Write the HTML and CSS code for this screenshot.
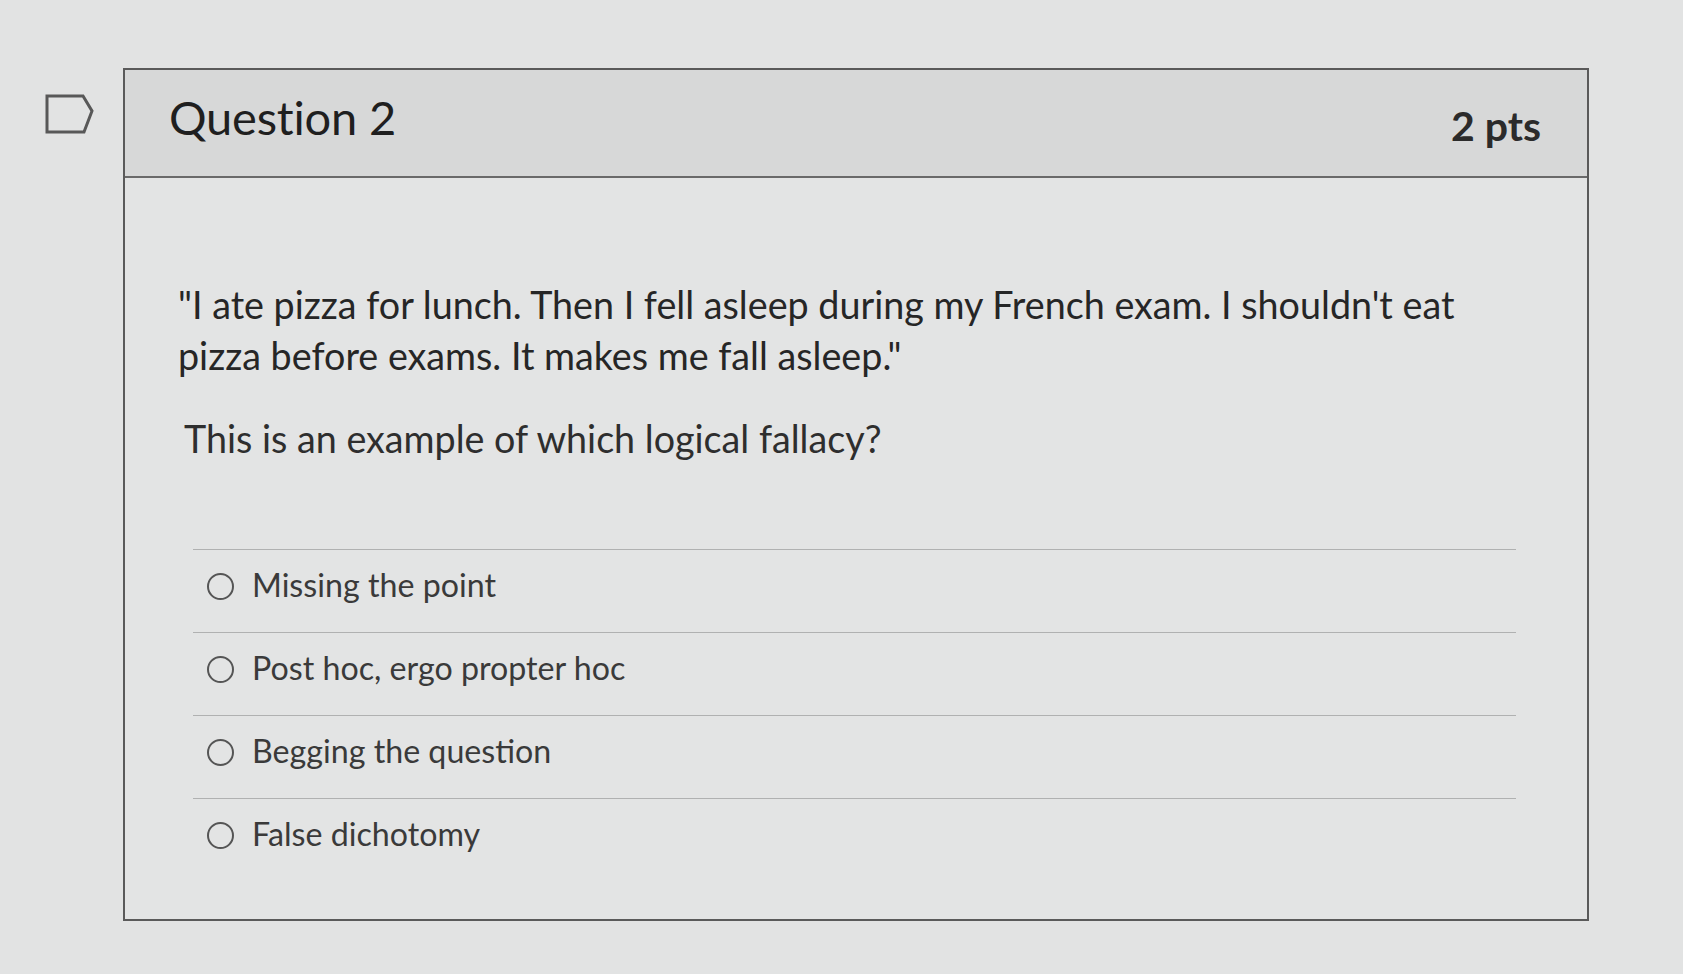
FILE: index.html
```html
<!DOCTYPE html>
<html lang="en">
<head>
<meta charset="utf-8">
<title>Question 2</title>
<link rel="stylesheet" href="styles.css">
</head>
<body>
<div class="page">
  <div class="flag">
    <svg width="50" height="40" viewBox="0 0 50 40" aria-hidden="true">
      <path d="M2 2 H38 L47 17 L39 38 H2 Z" fill="none" stroke="#585858" stroke-width="3" stroke-linejoin="miter"/>
    </svg>
  </div>
  <div class="card">
    <div class="card-header">
      <h2 class="q-title">Question 2</h2>
      <span class="q-points">2 pts</span>
    </div>
    <div class="card-body">
      <p class="q-text">"I ate pizza for lunch. Then I fell asleep during my French exam. I shouldn't eat pizza before exams. It makes me fall asleep."</p>
      <p class="q-text q-ask">This is an example of which logical fallacy?</p>
      <ul class="answers">
        <li class="answer"><span class="radio"></span><span class="answer-label">Missing the point</span></li>
        <li class="answer"><span class="radio"></span><span class="answer-label">Post hoc, ergo propter hoc</span></li>
        <li class="answer"><span class="radio"></span><span class="answer-label">Begging the question</span></li>
        <li class="answer"><span class="radio"></span><span class="answer-label">False dichotomy</span></li>
      </ul>
    </div>
  </div>
</div>
</body>
</html>
```
FILE: styles.css
```css
html, body {
  margin: 0;
  padding: 0;
}
body {
  background: #e2e3e3;
  font-family: Lato, "Open Sans", "Liberation Sans", sans-serif;
  color: #2a2a2a;
  width: 1683px;
  height: 974px;
  overflow: hidden;
}
.page {
  display: flex;
  align-items: flex-start;
  padding: 68px 0 0 45px;
}
.flag {
  width: 50px;
  height: 40px;
  margin-top: 26px;
  flex: none;
}
.flag svg {
  display: block;
}
.card {
  margin-left: 28px;
  width: 1466px;
  height: 853px;
  box-sizing: border-box;
  border: 2px solid #5a5a5a;
  background: #e3e4e4;
  display: flex;
  flex-direction: column;
}
.card-header {
  height: 108px;
  box-sizing: border-box;
  background: #d7d8d8;
  border-bottom: 2px solid #6a6a6a;
  display: flex;
  align-items: center;
  justify-content: space-between;
  padding: 0 46px 0 44px;
}
.q-title {
  margin: 0 0 12px 0;
  font-size: 47px;
  font-weight: 400;
  color: #1f1f1f;
  letter-spacing: -0.2px;
}
.q-points {
  font-size: 41px;
  font-weight: 700;
  color: #2b2b2b;
  margin-top: 4px;
}
.card-body {
  padding: 101px 60px 0 53px;
}
.q-text {
  margin: 0;
  font-size: 37.7px;
  line-height: 51px;
  color: #262626;
  max-width: 1330px;
}
.q-ask {
  margin-top: 32px;
  padding-left: 6px;
  color: #2e2e2e;
}
.answers {
  list-style: none;
  margin: 85px 0 0 15px;
  padding: 0;
  width: 1323px;
}
.answer {
  height: 83px;
  box-sizing: border-box;
  border-top: 1.5px solid #b0b1b1;
  display: flex;
  align-items: flex-start;
  padding: 16px 0 0 14px;
}
.radio {
  width: 23px;
  height: 23px;
  border: 2.5px solid #555;
  border-radius: 50%;
  margin-top: 7px;
  flex: none;
}
.answer-label {
  margin-left: 18px;
  font-size: 32.2px;
  line-height: 38px;
  color: #3a3a3a;
}
```
